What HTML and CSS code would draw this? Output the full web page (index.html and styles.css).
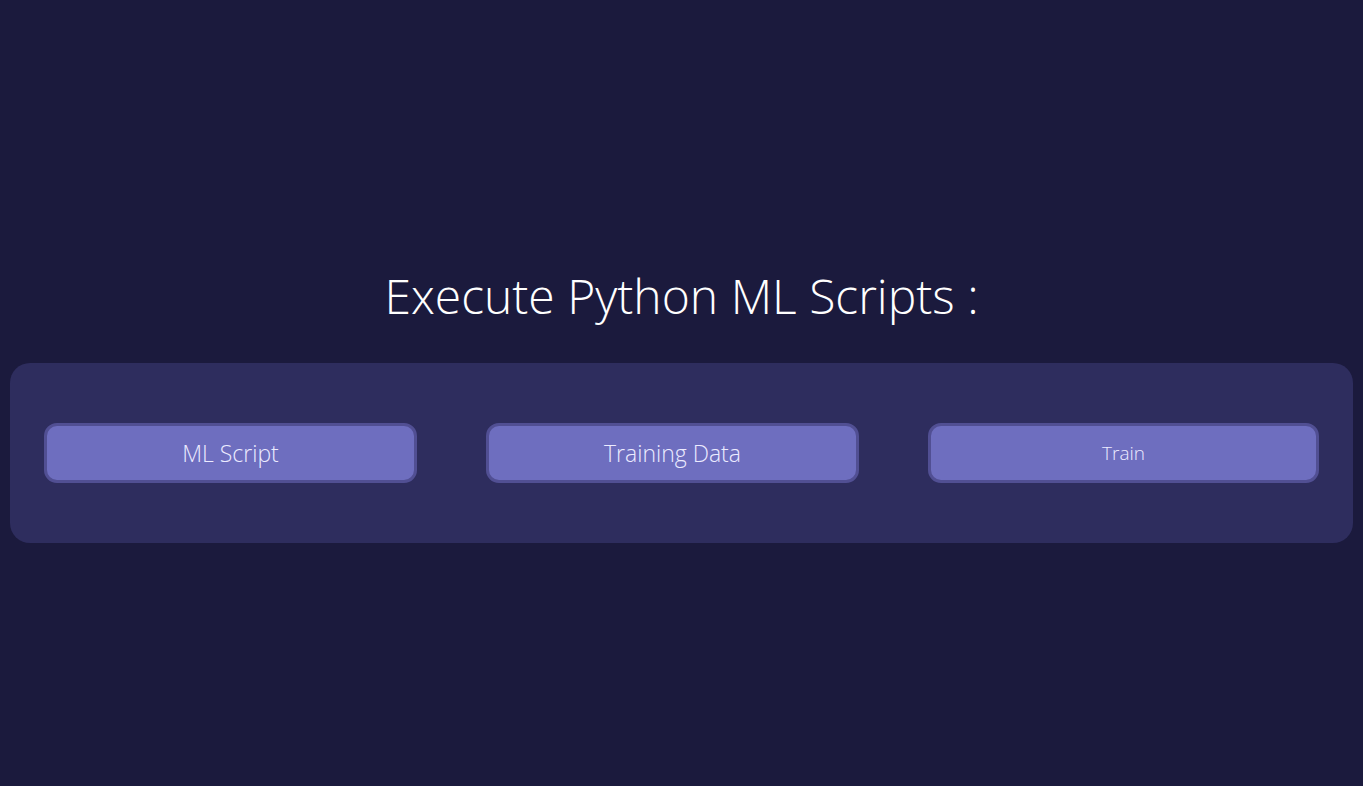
FILE: index.html
```html
<!DOCTYPE html>
<html lang="en">
<head>
<meta charset="utf-8">
<title>Execute Python ML Scripts</title>
<link rel="stylesheet" href="styles.css">
</head>
<body>
<main class="page">
  <h1 class="title">Execute Python ML Scripts :</h1>
  <section class="panel">
    <label class="btn btn-file">ML Script</label>
    <label class="btn btn-file">Training Data</label>
    <button class="btn btn-train" type="button">Train</button>
  </section>
</main>
</body>
</html>
```
FILE: styles.css
```css
html, body {
  margin: 0;
  padding: 0;
  height: 100%;
  background: #1b1a3d;
}
body {
  font-family: "Open Sans", "Noto Sans", sans-serif;
  color: #ffffff;
}
.page {
  display: flex;
  flex-direction: column;
  align-items: stretch;
  padding: 262px 10px 0;
}
.title {
  margin: 0 0 33px;
  text-align: center;
  font-weight: 300;
  font-size: 48px;
  line-height: 68px;
  letter-spacing: 0;
}
.panel {
  display: grid;
  grid-template-columns: 373px 373px 391px;
  column-gap: 69px;
  padding: 60px 34px;
  background: #2e2d5e;
  border-radius: 20px;
}
.btn {
  box-sizing: border-box;
  height: 60px;
  display: flex;
  align-items: center;
  justify-content: center;
  background: #6e6ebf;
  border: 3px solid #514f93;
  border-radius: 13px;
  color: #ecebff;
  font-family: "Open Sans", "Noto Sans", sans-serif;
  font-weight: 300;
  font-size: 23px;
  padding: 0;
  margin: 0;
  cursor: pointer;
}
.btn-train {
  font-size: 19px;
  font-weight: 300;
}
```
